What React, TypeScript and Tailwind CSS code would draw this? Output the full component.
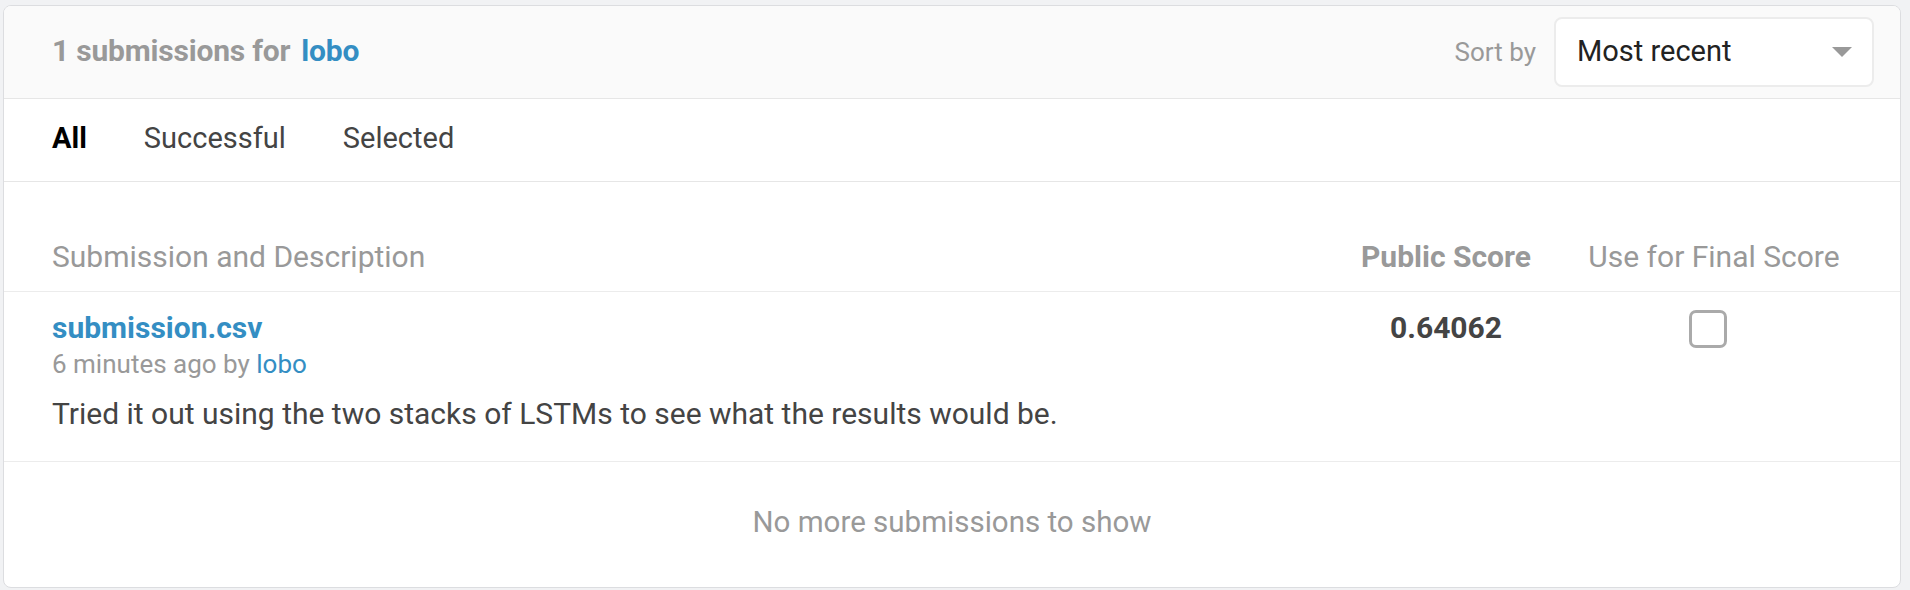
import React from "react";

const font = { fontFamily: "Roboto, 'Liberation Sans', sans-serif" };

interface TabProps {
  label: string;
  active?: boolean;
}
function Tab(props: TabProps) {
  return (
    <span
      className={
        props.active
          ? "text-[29px] leading-[36px] font-bold text-black"
          : "text-[29px] leading-[36px] text-[#444]"
      }
    >
      {props.label}
    </span>
  );
}

export default function App() {
  return (
    <main
      className="min-h-screen bg-[#f1f2f4] pl-[3px] pr-[9px] pt-[5px] pb-[3px]"
      style={font}
    >
      <div className="bg-white border border-[#dcdde0] rounded-[8px] overflow-hidden">
        {/* header */}
        <div className="h-[93px] bg-[#fafafa] border-b border-[#e6e6e6] flex items-center justify-between pl-[48px] pr-[26px]">
          <h2 className="text-[30px] font-bold text-[#999] flex gap-[11px] tracking-[-0.2px] pb-[3px]">
            <span>1 submissions for</span>
            <a className="text-[#348ec3]">lobo</a>
          </h2>
          <div className="flex items-center gap-[18px]">
            <span className="text-[26px] text-[#999]">Sort by</span>
            <div className="w-[320px] h-[70px] bg-white border-2 border-[#ececec] rounded-[8px] flex items-center justify-between pl-[21px] pr-[20px]">
              <span className="text-[29px] text-[#222]">Most recent</span>
              <svg width="20" height="10" viewBox="0 0 20 10">
                <path d="M0 0 L20 0 L10 10 Z" fill="#999" />
              </svg>
            </div>
          </div>
        </div>

        {/* tabs */}
        <div className="h-[83px] border-b border-[#e6e6e6] flex items-center gap-[57px] pl-[48px] pb-[4px]">
          <Tab label="All" active />
          <Tab label="Successful" />
          <Tab label="Selected" />
        </div>

        {/* table head */}
        <div className="h-[110px] border-b border-[#ececec] flex items-end pb-[16px] pl-[48px] pr-[56px] text-[30px] leading-[36px] text-[#999]">
          <span className="flex-1">Submission and Description</span>
          <span className="w-[276px] text-center font-bold">Public Score</span>
          <span className="w-[260px] text-center">Use for Final Score</span>
        </div>

        {/* submission row */}
        <div className="border-b border-[#ececec] flex pt-[18px] pb-[29px] pl-[48px] pr-[56px]">
          <div className="flex-1 flex flex-col">
            <a className="text-[30px] leading-[36px] font-bold text-[#348ec3]">
              submission.csv
            </a>
            <span className="text-[26px] leading-[36px] text-[#999]">
              6 minutes ago by <a className="text-[#348ec3]">lobo</a>
            </span>
            <p className="mt-[14px] text-[30px] leading-[36px] text-[#444]">
              Tried it out using the two stacks of LSTMs to see what the results would be.
            </p>
          </div>
          <span className="w-[276px] text-center text-[30px] leading-[36px] font-bold text-[#444]">
            0.64062
          </span>
          <div className="w-[260px] flex justify-center">
            <span className="w-[38px] h-[38px] border-[3px] border-[#aaa] rounded-[7px] mr-[12px]" />
          </div>
        </div>

        {/* footer */}
        <div className="h-[125px] flex items-center justify-center pb-[4px] text-[29.5px] text-[#999]">
          No more submissions to show
        </div>
      </div>
    </main>
  );
}
